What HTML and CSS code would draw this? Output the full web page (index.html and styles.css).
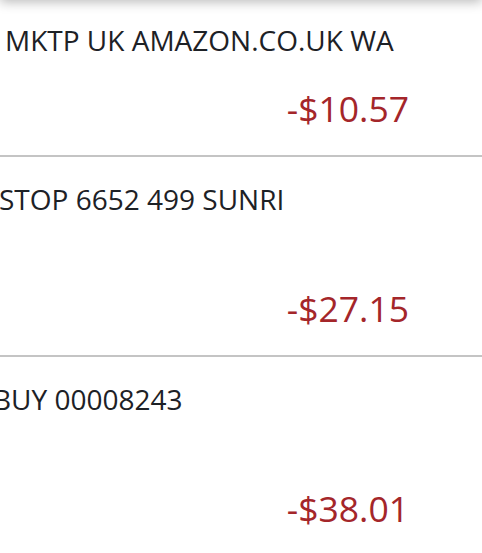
FILE: index.html
```html
<!DOCTYPE html>
<html lang="en">
<head>
    <meta charset="UTF-8">
    <meta name="viewport" content="width=device-width, initial-scale=1.0">
    <title>Transactions</title>
    <link rel="stylesheet" href="styles.css">
</head>
<body>

    <div class="topbar"></div>

    <div class="txn-list">
        <div class="txn">
            <div class="desc first">MKTP UK AMAZON.CO.UK WA</div>
            <div class="amount">-$10.57</div>
        </div>
        <div class="txn">
            <div class="desc second">STOP 6652 499 SUNRI</div>
            <div class="desc">&nbsp;</div>
            <div class="amount">-$27.15</div>
        </div>
        <div class="txn">
            <div class="desc third">BUY 00008243</div>
            <div class="desc">&nbsp;</div>
            <div class="amount">-$38.01</div>
        </div>
    </div>

</body>
</html>
```

FILE: styles.css
```css
body { margin: 0; background: #fff; font-family: "Open Sans", "DejaVu Sans", sans-serif; overflow: hidden; }
.topbar { position: fixed; top: -20px; left: 0; right: 0; height: 20px; background: #fff; box-shadow: 0 2px 12px rgba(0,0,0,0.28); }
.txn-list { margin-top: -2px; }
.txn { padding: 22px 0 24px; border-bottom: 2px solid #c4c4c4; }
.desc { font-size: 28px; line-height: 41px; color: #1d2126; white-space: nowrap; }
.desc.first { text-indent: 5px; }
.desc.second { text-indent: -1px; }
.desc.third { text-indent: -7px; }
.amount { margin-top: 24px; padding-right: 73px; text-align: right; font-size: 35.5px; line-height: 46px; color: #a4262a; }
```
